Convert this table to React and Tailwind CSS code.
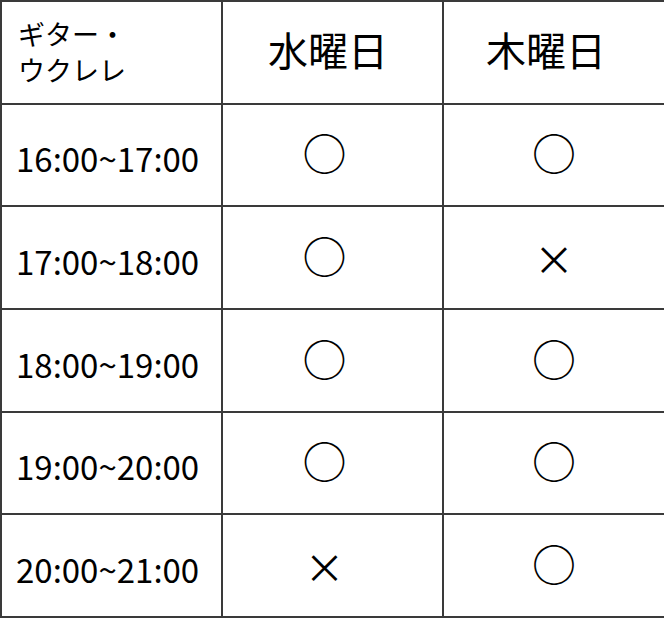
const font = { fontFamily: '"Noto Sans CJK JP", "Noto Sans", sans-serif' };

const rows = [
  { time: "16:00~17:00", wed: "o", thu: "o" },
  { time: "17:00~18:00", wed: "o", thu: "x" },
  { time: "18:00~19:00", wed: "o", thu: "o" },
  { time: "19:00~20:00", wed: "o", thu: "o" },
  { time: "20:00~21:00", wed: "x", thu: "o" },
];

const Mark = ({ type }) =>
  type === "o" ? (
    <span className="text-[44px] leading-none text-black -mt-[5px]">○</span>
  ) : (
    <span className="text-[40px] leading-none text-black">×</span>
  );

const cell = "border-r-2 border-b-2 border-[#3a3a3a] flex items-center";

export default function App() {
  return (
    <div
      className="w-[664px] h-[618px] bg-white grid grid-cols-[221px_221px_222px] grid-rows-6 border-l-2 border-t-2 border-[#3a3a3a] text-black"
      style={font}
    >
      <div className={`${cell} pl-[16px]`}>
        <div className="text-[27px] leading-[36px]">
          ギター・
          <br />
          ウクレレ
        </div>
      </div>
      <div className={`${cell} justify-center text-[40px] pr-[9px] pb-[6px]`}>水曜日</div>
      <div className={`${cell} justify-center text-[40px] pr-[16px] pb-[6px]`}>木曜日</div>

      {rows.map((r) => (
        <div key={r.time} className="contents">
          <div className={`${cell} pl-[14px] text-[33px] pt-[8px]`}>{r.time}</div>
          <div className={`${cell} justify-center pr-[16px]`}>
            <Mark type={r.wed} />
          </div>
          <div className={`${cell} justify-center`}>
            <Mark type={r.thu} />
          </div>
        </div>
      ))}
    </div>
  );
}
